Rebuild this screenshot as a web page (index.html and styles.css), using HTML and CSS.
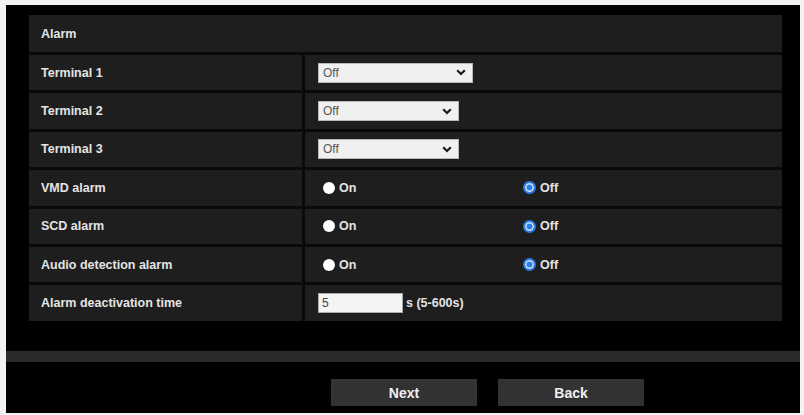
FILE: index.html
```html
<!DOCTYPE html>
<html>
<head>
<meta charset="utf-8">
<link rel="stylesheet" href="styles.css">
</head>
<body>
<div class="frame">
  <div class="main">
    <div class="table">
      <div class="head">Alarm</div>
      <div class="row">
        <div class="label">Terminal 1</div>
        <div class="value">
          <div class="sel wide"><span>Off</span><svg class="chev" width="10" height="7" viewBox="0 0 10 7"><path d="M1.2 1.2 L5 5 L8.8 1.2" fill="none" stroke="#1a1a1a" stroke-width="2.2"/></svg></div>
        </div>
      </div>
      <div class="row">
        <div class="label">Terminal 2</div>
        <div class="value">
          <div class="sel"><span>Off</span><svg class="chev" width="10" height="7" viewBox="0 0 10 7"><path d="M1.2 1.2 L5 5 L8.8 1.2" fill="none" stroke="#1a1a1a" stroke-width="2.2"/></svg></div>
        </div>
      </div>
      <div class="row">
        <div class="label">Terminal 3</div>
        <div class="value">
          <div class="sel"><span>Off</span><svg class="chev" width="10" height="7" viewBox="0 0 10 7"><path d="M1.2 1.2 L5 5 L8.8 1.2" fill="none" stroke="#1a1a1a" stroke-width="2.2"/></svg></div>
        </div>
      </div>
      <div class="row">
        <div class="label">VMD alarm</div>
        <div class="value">
          <div class="opt"><span class="radio"></span>On</div>
          <div class="opt"><span class="radio checked"></span>Off</div>
        </div>
      </div>
      <div class="row">
        <div class="label">SCD alarm</div>
        <div class="value">
          <div class="opt"><span class="radio"></span>On</div>
          <div class="opt"><span class="radio checked"></span>Off</div>
        </div>
      </div>
      <div class="row">
        <div class="label">Audio detection alarm</div>
        <div class="value">
          <div class="opt"><span class="radio"></span>On</div>
          <div class="opt"><span class="radio checked"></span>Off</div>
        </div>
      </div>
      <div class="row">
        <div class="label">Alarm deactivation time</div>
        <div class="value">
          <input class="txt" type="text" value="5">
          <span class="unit">s (5-600s)</span>
        </div>
      </div>
    </div>
  </div>
  <div class="bar"></div>
  <div class="footer">
    <div class="btn">Next</div>
    <div class="btn">Back</div>
  </div>
</div>
</body>
</html>
```
FILE: styles.css
```css
html, body {
  margin: 0;
  padding: 0;
  background: #f2f2f2;
  font-family: "Liberation Sans", Arial, sans-serif;
}
.frame {
  margin: 5px 0 0 6px;
  width: 794px;
  height: 408px;
  background: #000;
  display: flex;
  flex-direction: column;
}
.main {
  height: 346px;
  box-sizing: border-box;
  padding: 10px 18px 0 23px;
}
.table {
  display: flex;
  flex-direction: column;
  gap: 3px;
  background: #0a0a0a;
}
.head {
  height: 37px;
  background: #1e1e1e;
  padding-left: 12px;
  display: flex;
  align-items: center;
  color: #e4e4e4;
  font-weight: bold;
  font-size: 12.5px;
}
.row {
  display: flex;
  gap: 3px;
  height: 35.4px;
}
.label {
  width: 273px;
  box-sizing: border-box;
  padding-left: 12px;
  background: #1e1e1e;
  display: flex;
  align-items: center;
  color: #e4e4e4;
  font-weight: bold;
  font-size: 12.5px;
}
.value {
  flex: 1;
  background: #1e1e1e;
  padding-left: 13px;
  display: flex;
  align-items: center;
  color: #e4e4e4;
  font-weight: bold;
  font-size: 12.5px;
}
.sel {
  width: 141px;
  height: 20px;
  box-sizing: border-box;
  background: #f0f0f0;
  border: 1px solid #b8b8b8;
  display: flex;
  align-items: center;
  justify-content: space-between;
  padding: 0 6px 0 4px;
  color: #555;
  font-weight: normal;
  font-size: 12px;
}
.sel.wide {
  width: 155px;
}
.chev {
  display: block;
}
.opt {
  width: 200px;
  display: flex;
  align-items: center;
}
.radio {
  width: 12px;
  height: 12px;
  box-sizing: border-box;
  border-radius: 50%;
  background: #fff;
  margin: 0 4px 0 5px;
}
.radio.checked {
  width: 13px;
  height: 13px;
  background: #2b7de9;
  border: 2px solid #2b7de9;
  box-shadow: inset 0 0 0 1.5px #dfe9f7;
  margin-right: 4px;
}
.txt {
  width: 85px;
  height: 20px;
  box-sizing: border-box;
  margin: 0;
  background: #f4f4f4;
  border: 1px solid #a8a8a8;
  padding: 0 3px;
  font-family: "Liberation Sans", Arial, sans-serif;
  font-size: 12px;
  color: #444;
  outline: none;
}
.unit {
  margin-left: 3px;
}
.bar {
  height: 11px;
  background: #2b2b2b;
}
.footer {
  flex: 1;
  display: flex;
  align-items: flex-start;
  gap: 21px;
  padding: 17px 0 0 325px;
}
.btn {
  width: 146px;
  height: 27px;
  background: #323232;
  color: #f0f0f0;
  font-weight: bold;
  font-size: 14px;
  display: flex;
  align-items: center;
  justify-content: center;
}
```
